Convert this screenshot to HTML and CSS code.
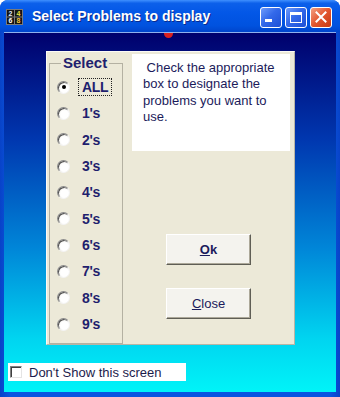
FILE: index.html
```html
<!DOCTYPE html>
<html>
<head>
<meta charset="utf-8">
<link rel="stylesheet" href="styles.css">
</head>
<body>
<div class="window">
  <div class="titlebar">
    <svg class="app-icon" width="17" height="16" viewBox="0 0 17 16">
      <rect width="17" height="16" fill="#7a7a7a"/>
      <rect x="1" y="1" width="7" height="6.5" fill="#141414"/>
      <rect x="9" y="1" width="7" height="6.5" fill="#141414"/>
      <rect x="1" y="8.5" width="7" height="6.5" fill="#141414"/>
      <rect x="9" y="8.5" width="7" height="6.5" fill="#141414"/>
      <text x="4.5" y="6.8" font-size="7" font-weight="bold" font-family="Liberation Sans, sans-serif" fill="#dfe8ff" text-anchor="middle">2</text>
      <text x="12.5" y="6.8" font-size="7" font-weight="bold" font-family="Liberation Sans, sans-serif" fill="#e8e040" text-anchor="middle">4</text>
      <text x="4.5" y="14.3" font-size="7" font-weight="bold" font-family="Liberation Sans, sans-serif" fill="#ffffff" text-anchor="middle">6</text>
      <text x="12.5" y="14.3" font-size="7" font-weight="bold" font-family="Liberation Sans, sans-serif" fill="#f0c040" text-anchor="middle">8</text>
    </svg>
    <span class="title">Select Problems to display</span>
    <div class="ctrls">
      <span class="cbtn">
        <svg width="20" height="19" viewBox="0 0 20 19"><rect x="4" y="11" width="7" height="3" fill="#fff"/></svg>
      </span>
      <span class="cbtn">
        <svg width="20" height="19" viewBox="0 0 20 19"><rect x="4.5" y="4.5" width="11" height="10" fill="none" stroke="#fff" stroke-width="1"/><rect x="4" y="4" width="12" height="3" fill="#fff"/></svg>
      </span>
      <span class="cbtn close">
        <svg width="20" height="19" viewBox="0 0 20 19"><path d="M5.5 4.5 L14.5 13.5 M14.5 4.5 L5.5 13.5" stroke="#fff" stroke-width="2" stroke-linecap="square"/></svg>
      </span>
    </div>
  </div>
  <div class="client">
    <div class="panel">
      <fieldset class="group">
        <legend>Select</legend>
        <ul class="radios">
          <li><span class="radio on"></span><span class="lbl focus">ALL</span></li>
          <li><span class="radio"></span><span class="lbl">1's</span></li>
          <li><span class="radio"></span><span class="lbl">2's</span></li>
          <li><span class="radio"></span><span class="lbl">3's</span></li>
          <li><span class="radio"></span><span class="lbl">4's</span></li>
          <li><span class="radio"></span><span class="lbl">5's</span></li>
          <li><span class="radio"></span><span class="lbl">6's</span></li>
          <li><span class="radio"></span><span class="lbl">7's</span></li>
          <li><span class="radio"></span><span class="lbl">8's</span></li>
          <li><span class="radio"></span><span class="lbl">9's</span></li>
        </ul>
      </fieldset>
      <div class="side">
        <div class="note">&nbsp;Check the appropriate box to designate the problems you want to use.</div>
        <button class="btn ok"><u>O</u>k</button>
        <button class="btn cls"><u>C</u>lose</button>
      </div>
    </div>
    <label class="dontshow"><span class="chk"></span>Don't Show this screen</label>
  </div>
  <span class="marker"></span>
</div>
</body>
</html>
```

FILE: styles.css
```css
* { box-sizing: border-box; }
body {
  margin: 0;
  font-family: "Liberation Sans", Arial, sans-serif;
  background: #fff;
}
.window {
  width: 340px;
  height: 397px;
  background: linear-gradient(to right, #0843c8, #0a55e0 3%, #0a55e0 97%, #0843c8);
  border-radius: 8px 8px 0 0;
  display: flex;
  flex-direction: column;
  position: relative;
  overflow: hidden;
}
.titlebar {
  height: 32px;
  flex: none;
  display: flex;
  align-items: center;
  padding: 0 8px 0 6px;
  background: linear-gradient(#3f90ff 0%, #0c60ea 10%, #0357e7 40%, #0052df 80%, #0045cc 100%);
}
.app-icon { flex: none; margin-top: 1px; }
.title {
  flex: 1;
  margin-left: 9px;
  color: #fff;
  font-weight: bold;
  font-size: 14px;
  text-shadow: 1px 1px 0 #0b2a8c;
  white-space: nowrap;
}
.ctrls { display: flex; gap: 3px; margin-top: 3px; }
.cbtn {
  width: 22px;
  height: 21px;
  border: 1px solid #fff;
  border-radius: 3px;
  background: linear-gradient(135deg, #6e9cfb 0%, #3369ea 45%, #1d50d6 100%);
  display: block;
}
.cbtn svg { display: block; }
.cbtn.close {
  background: linear-gradient(135deg, #f3a083 0%, #e2552e 50%, #c63a14 100%);
}
.client {
  flex: 1;
  margin: 0 4px 5px;
  border-top: 1px solid #8fb1ee;
  background: linear-gradient(#00006c 0%, #0038b0 30%, #0086d8 60%, #00d4f0 85%, #00f4f8 100%);
  display: flex;
  flex-direction: column;
  align-items: flex-start;
}
.panel {
  margin: 18px 0 0 42px;
  width: 249px;
  height: 294px;
  background: #ece9d8;
  border: 1px solid;
  border-color: #fbfaf6 #b8b5a6 #b8b5a6 #fbfaf6;
  display: flex;
  align-items: flex-start;
}
.group {
  margin: 3px 0 0 2px;
  width: 74px;
  height: 289px;
  min-width: 0;
  padding: 0;
  border: 1px solid #b4b1a2;
}
.group legend {
  margin-left: 11px;
  padding: 0 2px;
  font-weight: bold;
  font-size: 15px;
  line-height: 16px;
  color: #1f1f6e;
}
.radios {
  list-style: none;
  margin: 3px 0 0;
  padding: 0 0 0 7px;
}
.radios li {
  height: 26.33px;
  display: flex;
  align-items: center;
}
.radio {
  flex: none;
  width: 13px;
  height: 13px;
  border-radius: 50%;
  background: radial-gradient(circle at 60% 60%, #ffffff 40%, #e6e4dc 100%);
  border: 1px solid;
  border-color: #8c8c8c #f4f4f4 #f4f4f4 #8c8c8c;
  box-shadow: inset 1px 1px 0 #505050;
  position: relative;
}
.radio.on::after {
  content: "";
  position: absolute;
  left: 3.5px;
  top: 3.5px;
  width: 4px;
  height: 4px;
  border-radius: 50%;
  background: #000;
}
.lbl {
  margin-left: 8px;
  padding: 0 3px;
  border: 1px dotted transparent;
  font-weight: bold;
  font-size: 14px;
  line-height: 16px;
  letter-spacing: -0.3px;
  color: #1f1f6e;
}
.lbl.focus { border-color: #222; }
.side {
  margin: 2px 0 0 9px;
  width: 158px;
  display: flex;
  flex-direction: column;
  align-items: flex-start;
}
.note {
  width: 158px;
  height: 97px;
  background: #fff;
  padding: 6px 4px 0 11px;
  font-size: 13px;
  line-height: 16.3px;
  color: #1b1b5b;
}
.btn {
  margin-left: 34px;
  width: 85px;
  height: 31px;
  padding: 0;
  background: #f4f3ee;
  border: 1px solid;
  border-color: #fff #5f5e55 #5f5e55 #fff;
  box-shadow: inset -1px -1px 0 #aca899;
  font-family: "Liberation Sans", Arial, sans-serif;
  font-size: 13px;
  color: #1b1b5b;
}
.btn.ok { margin-top: 83px; font-weight: bold; }
.btn.cls { margin-top: 23px; }
.dontshow {
  margin: 18px 0 0 4px;
  width: 178px;
  height: 18px;
  background: #fff;
  display: flex;
  align-items: center;
  padding-left: 2px;
  font-size: 13px;
  color: #1b1b4b;
}
.chk {
  flex: none;
  width: 12px;
  height: 12px;
  margin-right: 7px;
  background: #fff;
  border: 1px solid;
  border-color: #808080 #e4e4e4 #e4e4e4 #808080;
  box-shadow: inset 1px 1px 0 #404040;
}
.marker {
  position: absolute;
  left: 164px;
  top: 33px;
  width: 9px;
  height: 5px;
  border-radius: 0 0 5px 5px;
  background: #d82020;
}
```
